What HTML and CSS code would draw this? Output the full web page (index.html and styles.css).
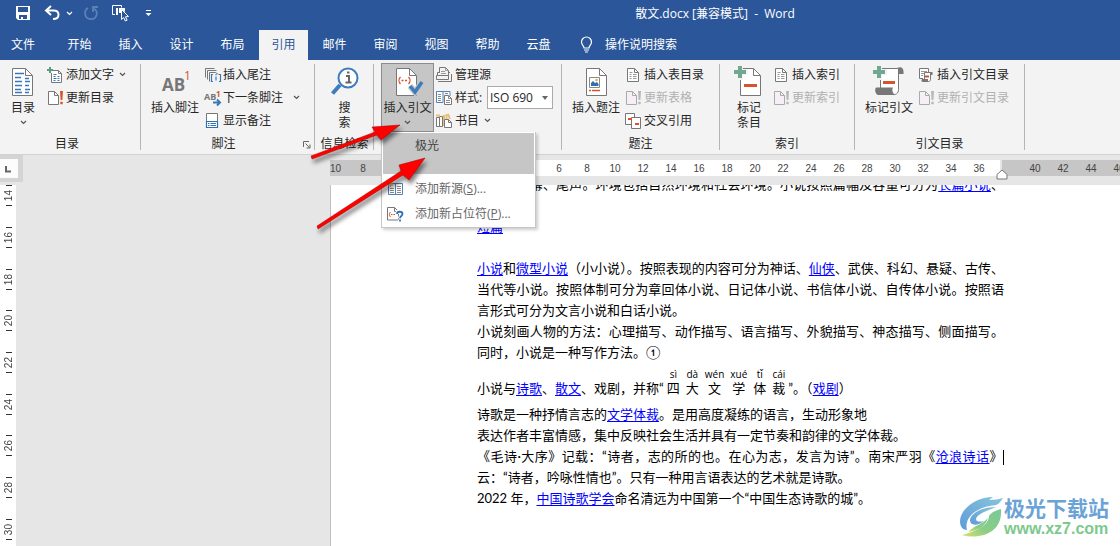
FILE: index.html
```html
<!DOCTYPE html>
<html lang="zh-CN">
<head>
<meta charset="utf-8">
<title>散文.docx - Word</title>
<link rel="stylesheet" href="styles.css">
</head>
<body>
<svg class="defs" aria-hidden="true">
  <symbol id="caret" viewBox="0 0 7 5"><path d="M1 1l2.5 2.5L6 1" fill="none" stroke="currentColor" stroke-width="1.2"/></symbol>
  <symbol id="update" viewBox="0 0 18 16">
    <path d="M1.500 1.500h6l4 4v9h-10z" fill="var(--paper)" stroke="currentColor"/><path d="M7.500 1.500v4h4" fill="none" stroke="currentColor"/>
    <path d="M13 1h3l-.6 9h-1.800zM13.300 11.800h2.400v2.400h-2.400z" fill="var(--mark)"/>
  </symbol>
  <symbol id="list" viewBox="0 0 18 16">
    <path d="M2.500 1.500h7l4 4v9h-11z" fill="#fff" stroke="#777"/><path d="M9.500 1.500v4h4" fill="none" stroke="#777"/>
    <path d="M4.500 5.500h3M4.500 7.500h2M8 7.500h3.500M4.500 9.500h2M8 9.500h3.500M4.500 11.500h2M8 11.500h3.500" stroke="#999"/>
  </symbol>
</svg>

<header class="titlebar">
  <div class="quick">
    <button class="q save" aria-label="保存"><svg width="16" height="16" viewBox="0 0 16 16"><path d="M1 1h14v14H3l-2-2z" fill="#fff"/><path d="M3 2h10v5H3zM4 10h8v4H4z" fill="#2b579a"/><path d="M6 12h2v2H6z" fill="#fff"/></svg></button>
    <button class="q undo" aria-label="撤消"><svg width="16" height="16" viewBox="0 0 16 16"><path d="M7 1L2 5.500 7 10M2.500 5.500h7c3 0 5 1.500 5 4.200 0 2.600-2 4.300-5.500 4.300" fill="none" stroke="#fff" stroke-width="2"/></svg></button>
    <button class="q more" aria-label="撤消选项"><svg width="7" height="5"><use href="#caret"/></svg></button>
    <button class="q redo" aria-label="重复" disabled><svg width="16" height="16" viewBox="0 0 16 16"><path d="M5 3C.5 5.500 1 14 8 14.200c6.500 0 7.500-8 3-10.400M10 7V2h5" fill="none" stroke="#5c80b8" stroke-width="1.800"/></svg></button>
    <button class="q touch" aria-label="触摸/鼠标模式"><svg width="18" height="18" viewBox="0 0 18 18"><path d="M4 10.500H1.500v-9h9v2" fill="none" stroke="#fff"/><path d="M5 4h2v7H5zM8 4h6v4l-4-3v4H8z" fill="#fff"/><path d="M10.500 5.500v10l2.200-2 1.600 3.500 1.800-.8-1.600-3.400 3-.3z" fill="#2b579a" stroke="#fff"/></svg></button>
    <button class="q custom" aria-label="自定义快速访问工具栏"><svg width="7" height="8" viewBox="0 0 7 8"><path d="M1 1.500h5" stroke="#fff"/><path d="M.5 4h6l-3 3z" fill="#fff"/></svg></button>
  </div>
  <div class="doc-title">散文.docx [兼容模式]&nbsp; -&nbsp; Word</div>
</header>

<nav class="tabs">
  <button class="tab file">文件</button><button class="tab">开始</button><button class="tab">插入</button><button class="tab">设计</button><button class="tab">布局</button><button class="tab active">引用</button><button class="tab">邮件</button><button class="tab">审阅</button><button class="tab">视图</button><button class="tab">帮助</button><button class="tab">云盘</button>
  <button class="tell-me"><svg width="13" height="17" viewBox="0 0 13 17"><path d="M4 12c0-2.500-2.500-3-2.500-6a5 5 0 0 1 10 0c0 3-2.500 3.500-2.500 6zM4 14h5M5 16h3" fill="none" stroke="#fff" stroke-width="1.200"/></svg>操作说明搜索</button>
</nav>

<section class="ribbon">
  <div class="group g-toc">
    <div class="tools">
      <button class="big">
        <svg width="32" height="32" viewBox="0 0 32 32"><path d="M5.500 3.500h13l7 7v20h-20z" fill="#fff" stroke="#777"/><path d="M18.500 3.500v7h7" fill="none" stroke="#777"/><path d="M8 8.500h9M8 12.500h6M8 16.500h7M8 20.500h7M8 24.500h6M8 27.500h7M18 13.500h4M18 16.500h5M18 20.500h4M18 24.500h5M18 27.500h4" stroke="#3a78b8" stroke-width="1.300"/></svg>
        <span>目录</span><svg class="drop" width="7" height="5"><use href="#caret"/></svg>
      </button>
      <div class="stack">
        <button class="small"><svg width="18" height="16" viewBox="0 0 18 16"><path d="M4.500 3.500h7l3 3v9h-10z" fill="#fff" stroke="#777"/><path d="M11.500 3.500v3h3" fill="none" stroke="#777"/><path d="M6.500 7.500h3M6.500 9.500h2M10.500 9.500h2M6.500 11.500h3M10.500 11.500h2M6.500 13.500h2M10.500 13.500h2" stroke="#3a78b8"/><path d="M3 0v6M0 3h6" stroke="#f3f3f3" stroke-width="4"/><path d="M3 0v6M0 3h6" stroke="#5a9d83" stroke-width="2"/></svg><span>添加文字</span><svg class="side-drop" width="7" height="5"><use href="#caret"/></svg></button>
        <button class="small upd"><svg width="18" height="16"><use href="#update"/></svg><span>更新目录</span></button>
      </div>
    </div>
    <div class="caption">目录</div>
  </div>

  <div class="group g-note">
    <div class="tools">
      <button class="big">
        <svg width="32" height="32" viewBox="0 0 32 32"><text x="3" y="26" class="ab-big">AB</text><text x="25" y="15" class="one-big">1</text></svg>
        <span>插入脚注</span>
      </button>
      <div class="stack">
        <button class="small"><svg width="18" height="16" viewBox="0 0 18 16"><path d="M1.500 10.500v-9h9M3.500 12.500v-9h9M5.500 14.500v-9h6l3 2" fill="none" stroke="#777"/><path d="M9 7.500H7.500v7H9M15 7.500h1.500v7H15M12 9.500v4M12 7v1.200" fill="none" stroke="#3a78b8" stroke-width="1.200"/></svg><span>插入尾注</span></button>
        <button class="small"><svg width="18" height="16" viewBox="0 0 18 16"><text x="0" y="10" class="ab-small">AB</text><text x="12" y="7" class="one-small">1</text><path d="M9 12.500h6M13 9.500l3 3-3 3" fill="none" stroke="#3a78b8" stroke-width="2"/></svg><span>下一条脚注</span><svg class="side-drop far" width="7" height="5"><use href="#caret"/></svg></button>
        <button class="small"><svg width="18" height="16" viewBox="0 0 18 16"><path d="M2.500.5h11v14h-11z" fill="#fff" stroke="#777"/><path d="M2.500 8.500h11v6h-11z" fill="#fff" stroke="#2f6fb3" stroke-width="1.200"/><path d="M4 10.500h1.500M6.500 10.500h5.500M4 12.500h1.500M6.500 12.500h5.500" stroke="#2f6fb3"/></svg><span>显示备注</span></button>
      </div>
    </div>
    <div class="caption with-launcher"><span>脚注</span><button class="launcher" aria-label="脚注和尾注"><svg width="9" height="9" viewBox="0 0 9 9"><path d="M1.500 7V1.500H7M3.500 3.500l4 4M8 4.500V8H4.500" fill="none" stroke="#666"/></svg></button></div>
  </div>

  <div class="group g-search">
    <div class="tools center">
      <button class="big">
        <svg width="32" height="32" viewBox="0 0 32 32"><path d="M11 20L3.500 28.500" stroke="#3f7cbc" stroke-width="4"/><circle cx="19" cy="13" r="9.500" fill="#fff" stroke="#3f7cbc" stroke-width="2"/><path d="M17 11h3v6M16.500 17.500h6M18 7.500h2.500" fill="none" stroke="#666" stroke-width="2"/></svg>
        <span>搜<br>索</span>
      </button>
    </div>
    <div class="caption">信息检索</div>
  </div>

  <div class="group g-cite">
    <div class="tools">
      <div class="menu-host">
        <button class="big pressed" aria-expanded="true">
          <svg width="32" height="32" viewBox="0 0 32 32"><path d="M4.500 3.500h13l7 7v20h-20z" fill="#fff" stroke="#777"/><path d="M17.500 3.500v7h7" fill="none" stroke="#777"/><path d="M8.500 12c-2 2-2 5 0 7M16.500 12c2 2 2 5 0 7M9.500 15.500h2M13 15.500h2" fill="none" stroke="#d8532b" stroke-width="1.300"/><path d="M18 21l5 6L30 17" fill="none" stroke="#c6c6c6" stroke-width="6"/><path d="M18 21l5 6L30 17" fill="none" stroke="#3f7cbc" stroke-width="3.500"/></svg>
          <span>插入引文</span><svg class="drop" width="7" height="5"><use href="#caret"/></svg>
        </button>
        <div class="menu">
          <button class="menu-item current">极光</button>
          <button class="menu-item"><svg width="18" height="16" viewBox="0 0 18 16"><path d="M1.500 2.500h7v11h-7zM8.500 2.500h7v11h-7z" fill="#fff" stroke="#4a83bd"/><path d="M3 7.500h4M3 9.500h4M3 11.500h4M10 5.500h4M10 7.500h4M10 9.500h4M10 11.500h4" stroke="#888"/><path d="M3.500 0v6M.5 3h6M1.500 1l4 4M5.500 1l-4 4" stroke="#e5aa50"/></svg><span>添加新源(<u>S</u>)...</span></button>
          <button class="menu-item"><svg width="18" height="16" viewBox="0 0 18 16"><path d="M.5 1.500h7l4 4v8.500h-11z" fill="#fff" stroke="#777"/><path d="M7.500 1.500v4h4" fill="none" stroke="#777"/><path d="M3.500 6C2 7.500 2 9.500 3.500 11M4 8.500h1.500M6.500 8.500h1.500" fill="none" stroke="#d8532b"/><path d="M10 8c0-3 5.500-3 5.500 0 0 2-2.500 2-2.500 4.200M13 13.500v2" fill="none" stroke="#fff" stroke-width="4"/><path d="M10 8c0-3 5.500-3 5.500 0 0 2-2.500 2-2.500 4.200M13 13.500v2" fill="none" stroke="#2f6fb3" stroke-width="1.800"/></svg><span>添加新占位符(<u>P</u>)...</span></button>
        </div>
      </div>
      <div class="stack">
        <button class="small"><svg width="18" height="16" viewBox="0 0 18 16"><path d="M3.500 6V.5h6l3 3V9M1.500 8V5.500h2M12.500 5.500h1.500" fill="none" stroke="#777"/><path d="M9.500.5v3h3M5 4.500h4M5 6.500h5" fill="none" stroke="#999"/><path d="M.5 8.500h12v4h-12z" fill="#f3f3f3" stroke="#777"/><path d="M2 14.500h13.500V7" fill="none" stroke="#777"/></svg><span>管理源</span></button>
        <div class="small style-row"><svg width="18" height="16" viewBox="0 0 18 16"><path d="M.5 1.500h6.500v11H.5zM7 1.500h7V6" fill="#fff" stroke="#4a83bd"/><path d="M2 4.500h3M2 6.500h3M2 8.500h3M2 10.500h3M9 3.500h3" stroke="#888"/><path d="M8.500 5.500h4l3 3v6h-7z" fill="#fff" stroke="#777"/><path d="M12.500 5.500v3h3M10 10.500h4M10 12.500h4" fill="none" stroke="#888"/></svg><label for="cite-style">样式:</label><span class="combo"><select id="cite-style"><option>ISO 690</option></select></span></div>
        <button class="small"><svg width="18" height="16" viewBox="0 0 18 16"><path d="M.5 4.500h3v9h-3zM3.500 3.500h3v10h-3z" fill="#fff" stroke="#777"/><path d="M0 2.500h4M8 13V2M10.500 6V1M12 1l2 5" stroke="#e9bf75" stroke-width="2"/><path d="M8.500 6.500h4l3 3v5h-7z" fill="#fff" stroke="#777"/><path d="M12.500 6.500v3h3" fill="none" stroke="#777"/></svg><span>书目</span><svg class="side-drop" width="7" height="5"><use href="#caret"/></svg></button>
      </div>
    </div>
  </div>

  <div class="group g-caption">
    <div class="tools">
      <button class="big">
        <svg width="32" height="32" viewBox="0 0 32 32"><path d="M6.500 3.500h13l7 7v20h-20z" fill="#fff" stroke="#777"/><path d="M19.500 3.500v7h7" fill="none" stroke="#777"/><path d="M9.500 12.500h10v10h-10z" fill="#fff" stroke="#888"/><path d="M11 21v-3l2-2 2 2 2-1 1.500 2v2z" fill="#2f6fb3"/><circle cx="16.500" cy="15" r="1.300" fill="#e9aa4d"/><path d="M9 25.500h2M12 25.500h8" stroke="#d8532b" stroke-width="1.300"/></svg>
        <span>插入题注</span>
      </button>
      <div class="stack">
        <button class="small"><svg width="18" height="16"><use href="#list"/></svg><span>插入表目录</span></button>
        <button class="small upd" disabled><svg width="18" height="16"><use href="#update"/></svg><span>更新表格</span></button>
        <button class="small"><svg width="18" height="16" viewBox="0 0 18 16"><path d="M.5.5h9v11H.5z" fill="#fff" stroke="#777"/><path d="M6.500 4.500h9v11h-9z" fill="#fff" stroke="#777"/><path d="M3 5h4v2H3zM10 10h4v2h-4z" fill="#d8532b"/></svg><span>交叉引用</span></button>
      </div>
    </div>
    <div class="caption">题注</div>
  </div>

  <div class="group g-index">
    <div class="tools">
      <button class="big">
        <svg width="32" height="32" viewBox="0 0 32 32"><path d="M7.500 3.500h13l7 7v20h-20z" fill="#fff" stroke="#777"/><path d="M20.500 3.500v7h7" fill="none" stroke="#777"/><path d="M11 20.500h13" stroke="#d8532b" stroke-width="3"/><path d="M7 0v15M0 7h15" stroke="#f3f3f3" stroke-width="6"/><path d="M7 1v12M1 7h12" stroke="#72a892" stroke-width="4"/></svg>
        <span>标记<br>条目</span>
      </button>
      <div class="stack">
        <button class="small"><svg width="18" height="16"><use href="#list"/></svg><span>插入索引</span></button>
        <button class="small upd" disabled><svg width="18" height="16"><use href="#update"/></svg><span>更新索引</span></button>
      </div>
    </div>
    <div class="caption">索引</div>
  </div>

  <div class="group g-authority">
    <div class="tools">
      <button class="big">
        <svg width="32" height="32" viewBox="0 0 32 32"><path d="M24 3c5-2 7 1 6.500 6H25z" fill="#777"/><path d="M7.500 3.500h18v21c0 4-3 5.500-6 5h-12z" fill="#fff" stroke="#777"/><path d="M3 22.500h17c-1.500 3 0 6 2 7.500H5c-3-1-3.500-6-2-7.500z" fill="#777"/><path d="M10 17.500h12" stroke="#d8532b" stroke-width="3"/><path d="M6 0v15M0 7h14" stroke="#f3f3f3" stroke-width="6"/><path d="M6 1v12M0 7h12" stroke="#72a892" stroke-width="4"/></svg>
        <span>标记引文</span>
      </button>
      <div class="stack">
        <button class="small"><svg width="18" height="16" viewBox="0 0 18 16"><path d="M5 11.500H1.500v-10h9V5" fill="#fff" stroke="#777"/><path d="M3 4.500h6M3 6.500h3M3 8.500h2" stroke="#999"/><path d="M6.500 5.500h6v7c0 2-1.500 2-2.500 2H6.500z" fill="#fff" stroke="#777"/><path d="M4 12h6v3H5c-1.500 0-2-2-1-3zM12 5h2.500v3H12z" fill="#777"/><path d="M7 9.500h4" stroke="#d8532b" stroke-width="2"/></svg><span>插入引文目录</span></button>
        <button class="small upd" disabled><svg width="18" height="16"><use href="#update"/></svg><span>更新引文目录</span></button>
      </div>
    </div>
    <div class="caption">引文目录</div>
  </div>
</section>

<main class="workspace">
  <div class="ruler-row">
    <button class="tab-stop" aria-label="制表符"><svg width="18" height="18" viewBox="0 0 18 18"><path d="M6 6v5.500h5" fill="none" stroke="#666" stroke-width="2"/></svg></button>
    <div class="ruler">
      <div class="r-before"><span>10</span><span>8</span><span>6</span><span>4</span><span>2</span></div>
      <div class="r-body"><span>2</span><span>4</span><span>6</span><span>8</span><span>10</span><span>12</span><span>14</span><span>16</span><span>18</span><span>20</span><span>22</span><span>24</span><span>26</span><span>28</span><span>30</span><span>32</span><span>34</span><span>36</span><svg class="indent" width="12" height="11" viewBox="0 0 12 11"><path d="M1 10V5.500L6 1l5 4.500V10z" fill="#fff" stroke="#777"/></svg></div>
      <div class="r-after"><span>40</span><span>42</span><span>44</span><span>46</span></div>
    </div>
  </div>
  <div class="canvas">
    <div class="v-ruler"><div class="v-scale"><div><b>14</b></div><div><b>16</b></div><div><b>18</b></div><div><b>20</b></div><div><b>22</b></div><div><b>24</b></div><div><b>26</b></div><div><b>28</b></div><div><b>30</b></div></div></div>
    <article class="page">
      <div class="text">
        <p class="full">的包括序幕、尾声。环境包括自然环境和社会环境。小说按照篇幅及容量可分为<a href="#">长篇小说</a>、</p>
        <p><a href="#">中篇小说</a>、</p>
        <p><a href="#">短篇</a></p>
        <p class="blank"></p>
        <p class="full"><a href="#">小说</a>和<a href="#">微型小说</a>（小小说）。按照表现的内容可分为神话、<a href="#">仙侠</a>、武侠、科幻、悬疑、古传、</p>
        <p class="full">当代等小说。按照体制可分为章回体小说、日记体小说、书信体小说、自传体小说。按照语</p>
        <p>言形式可分为文言小说和白话小说。</p>
        <p class="full">小说刻画人物的方法：心理描写、动作描写、语言描写、外貌描写、神态描写、侧面描写。</p>
        <p>同时，小说是一种写作方法。①</p>
        <p class="pinyin">小说与<a href="#">诗歌</a>、<a href="#">散文</a>、戏剧，并称“<ruby>四<rt>sì</rt></ruby><ruby>大<rt>dà</rt></ruby><ruby>文<rt>wén</rt></ruby><ruby>学<rt>xué</rt></ruby><ruby>体<rt>tǐ</rt></ruby><ruby>裁<rt>cái</rt></ruby>”。（<a href="#">戏剧</a>）</p>
        <p>诗歌是一种抒情言志的<a href="#">文学体裁</a>。是用高度凝练的语言，生动形象地</p>
        <p>表达作者丰富情感，集中反映社会生活并具有一定节奏和韵律的文学体裁。</p>
        <p class="full">《毛诗·大序》记载：“诗者，志的所的也。在心为志，发言为诗”。南宋严羽《<a href="#">沧浪诗话</a>》<span class="cursor"></span></p>
        <p>云：“诗者，吟咏性情也”。只有一种用言语表达的艺术就是诗歌。</p>
        <p>2022 年，<a href="#">中国诗歌学会</a>命名清远为中国第一个“中国生态诗歌的城”。</p>
      </div>
    </article>
  </div>
</main>

<svg class="arrows" width="130" height="120" viewBox="0 0 130 120" aria-hidden="true">
  <g fill="#f00" stroke="#a00000" stroke-width=".5">
    <path d="M11 41L75 17 72 12 100 10 81 25 77 20 12 44z"/>
    <path d="M17 111L101 56 99 50 125 43 109 65 103 60 18 114z"/>
  </g>
</svg>

<div class="watermark">
  <svg width="44" height="42" viewBox="0 0 44 42" aria-hidden="true">
    <defs>
      <linearGradient id="leaf" x1="0" y1="1" x2="1" y2="0"><stop offset="0" stop-color="#d8e070"/><stop offset=".4" stop-color="#8ccd84"/><stop offset="1" stop-color="#78c99a"/></linearGradient>
      <linearGradient id="wave" x1="1" y1="0" x2="0" y2="1"><stop offset="0" stop-color="#86c6dc"/><stop offset="1" stop-color="#5f9bd8"/></linearGradient>
    </defs>
    <path d="M33 0C15 0 0 13 0 24c0 6 3 9 7 9C4 22 14 10 36 8c3-1 5-4 7-7-4 1-8 2-14 2z" fill="url(#wave)"/>
    <path d="M36 10C22 10 11 16 10 23c0 6 8 6 14 1-4 1-8 1-8-2 1-5 11-8 20-12z" fill="url(#wave)"/>
    <path d="M41 12C31 15 29 18 29 20 28 28 17 34 2 38c18 5 41-2 39-26z" fill="url(#leaf)"/>
    <path d="M8 35c9-1 18-6 20-14-5 6-13 7-20 14z" fill="url(#leaf)"/>
  </svg>
  <div class="mark-text"><strong>极光下载站</strong><span>www.xz7.com</span></div>
</div>
</body>
</html>
```
FILE: styles.css
```css
* { box-sizing: border-box; }

body {
  margin: 0;
  height: 100vh;
  display: flex;
  flex-direction: column;
  overflow: hidden;
  position: relative;
  background: #e6e6e6;
  color: #262626;
  font: 12px/15px "Open Sans", "Noto Sans CJK SC", sans-serif;
}

button, select { font: inherit; color: inherit; }
button { border: 0; padding: 0; background: none; white-space: nowrap; }
svg { display: block; flex: none; overflow: visible; }
.defs { position: absolute; width: 0; height: 0; }

/* Title bar */
.titlebar { display: flex; align-items: center; flex: none; height: 26px; background: #2b579a; color: #fff; }
.quick { display: flex; align-items: center; padding-left: 15px; }
.undo { margin-left: 13px; }
.more { margin-left: 6px; }
.redo { margin-left: 10px; }
.touch { margin-left: 12px; }
.custom { margin-left: 16px; }
.doc-title { flex: 1; padding-left: 166px; text-align: center; white-space: nowrap; }
.titlebar .doc-title { padding-left: 158px; }

/* Tabs */
.tabs { display: flex; flex: none; gap: 2px; padding-top: 4px; background: #2b579a; color: #fff; }
.tab { width: 49px; height: 30px; padding-bottom: 2px; }
.tab.file { width: 53px; padding-right: 7px; }
.tab.active { background: #f3f3f3; color: #2b579a; }
.tell-me { display: flex; align-items: center; gap: 12px; padding: 0 0 2px 15px; }

/* Ribbon */
.ribbon { display: flex; flex: none; padding-top: 3px; border-bottom: 1px solid #d2d2d2; background: #f3f3f3; }
.group { position: relative; display: flex; flex-direction: column; flex: none; height: 91px; }
.group::after { content: ""; position: absolute; right: 0; top: 1px; bottom: 4px; width: 1px; background: #b4b4b4; }
.g-toc { width: 141px; padding-left: 1px; }
.g-note { width: 174px; padding-left: 7px; }
.g-search { width: 59px; }
.g-cite { width: 188px; padding-left: 7px; }
.g-caption { width: 158px; padding-left: 7px; }
.g-index { width: 135px; padding-left: 7px; }
.g-authority { width: 170px; padding-left: 7px; }
.tools { display: flex; height: 69px; }
.tools.center { justify-content: center; }
.big { display: flex; flex-direction: column; align-items: center; flex: none; min-width: 44px; height: 69px; padding: 2px 1px 0; }
.big span { margin-top: 3px; }
.g-note .big { width: 54px; }
.g-caption .big, .g-authority .big { width: 54px; }
.drop { margin-top: 5px; color: #555; }
.stack { display: flex; flex-direction: column; padding-left: 2px; }
.small { display: flex; align-items: center; height: 23px; gap: 1px; --paper: #fff; --mark: #d8532b; }
.upd svg { color: #777; }
.small:disabled { color: #b1b1b1; --paper: #f6f0f6; --mark: #b8b8b8; }
.small:disabled svg { color: #aaa; }
.side-drop { margin-left: 4px; color: #555; }
.side-drop.far { margin-left: 9px; }
.caption { flex: 1; padding: 4px 8px 0 0; text-align: center; }
.g-search .caption { padding-right: 0; }
.g-authority .caption { padding-right: 8px; }
.with-launcher { display: flex; padding-right: 4px; }
.with-launcher span { flex: 1; }
.launcher { align-self: flex-start; padding-top: 4px; }
.g-note .with-launcher { padding-left: 4px; margin-left: -7px; }
.ab-big { font: bold 17px "Open Sans", sans-serif; fill: #777; }
.one-big { font: 12px "Open Sans", sans-serif; fill: #d8532b; }
.ab-small { font: bold 9px "Open Sans", sans-serif; fill: #777; }
.one-small { font: bold 8px "Open Sans", sans-serif; fill: #d8532b; }

.menu-host { position: relative; }
.pressed { width: 53px; border: 1px solid #8c8c8c; background: #c6c6c6; padding: 1px 0 0; }
.style-row label { width: 31px; }
.combo { position: relative; display: block; }
.combo::after { content: ""; position: absolute; right: 5px; top: 10px; border: 3px solid transparent; border-top: 4px solid #666; border-bottom: 0; pointer-events: none; }
.combo select { display: block; width: 66px; height: 23px; padding: 0 2px; border: 1px solid #ababab; border-radius: 0; background: #fff; appearance: none; }

.menu { position: absolute; left: 0; top: 100%; z-index: 5; width: 155px; padding: 1px; border: 1px solid #c6c6c6; border-top-width: 0; background: #fff; box-shadow: 2px 2px 3px rgba(0, 0, 0, .2); color: #666; }
.menu-item { display: flex; align-items: center; gap: 10px; width: 100%; height: 25px; padding-left: 4px; }
.menu-item.current { height: 41px; margin-bottom: 2px; padding: 0 0 16px 32px; background: #c6c6c6; color: #444; }

/* Workspace */
.workspace { display: flex; flex-direction: column; flex: 1; min-height: 0; }
.ruler-row { display: flex; flex: none; height: 30px; overflow: hidden; }
.tab-stop { display: flex; align-items: center; flex: none; width: 23px; height: 27px; border: solid #d4d4d4; border-width: 4px 5px 4px 0; background: #fcfcfc; }
.ruler { display: flex; flex: 1; height: 16px; margin: 5px 0 0 307px; font: 10px/17px "Liberation Sans", sans-serif; color: #444; min-width: 0; }
.ruler span { flex: none; width: 28px; text-align: center; }
.r-before { display: flex; flex: none; width: 147px; overflow: hidden; background: #c6c6c6; }
.r-before span:first-child { width: 19px; padding-right: 9px; }
.r-body { position: relative; display: flex; flex: none; width: 523px; padding-left: 12px; background: #fff; }
.indent { position: absolute; right: -8px; top: 9px; }
.r-after { display: flex; flex: 1; min-width: 0; margin-left: 2px; padding-left: 19px; overflow: hidden; background: #c6c6c6; }

.canvas { display: flex; flex: 1; min-height: 0; overflow: hidden; }
.v-ruler { display: flex; flex: none; width: 16px; background: #fff; }
.v-scale { display: flex; flex-direction: column; flex: 1; margin: -10px 0 -4px; }
.v-scale div { display: flex; flex-direction: column; align-items: center; justify-content: center; flex: 1; padding-left: 2px; gap: 4px; }
.v-scale div::before, .v-scale div::after { content: ""; width: 6px; height: 1px; background: #333; }
.v-scale b { writing-mode: vertical-rl; transform: rotate(180deg); font: 10px/12px "Liberation Sans", sans-serif; color: #444; }

.page { flex: 1; min-width: 0; margin-left: 314px; padding-left: 146px; overflow: hidden; border-left: 1px solid #c0c0c0; background: #fff; color: #000; }
.text { width: 527px; margin-top: -11px; font: 13px/21px Lato, "Noto Sans CJK SC", sans-serif; }
.text p { margin: 0; height: 21px; white-space: nowrap; }
.text .full { text-align-last: justify; }
.text a { color: #00f; text-decoration: underline; text-underline-offset: 2px; }
.text .pinyin { height: 41px; padding-top: 15px; }
.pinyin ruby { padding: 0 3px; }
.pinyin rt { font: 10px/2px "Open Sans", sans-serif; }
.cursor { display: inline-block; width: 1px; height: 15px; background: #000; vertical-align: middle; }

/* Overlays */
.arrows { position: absolute; left: 300px; top: 115px; z-index: 10; pointer-events: none; filter: drop-shadow(2px 4px 2px rgba(0, 0, 0, .5)); }
.watermark { position: absolute; right: 11px; bottom: 7px; display: flex; align-items: center; }
.mark-text { display: flex; flex-direction: column; }
.mark-text strong { font: bold 21px/23px "Noto Sans CJK SC", sans-serif; color: #6ba3d6; }
.mark-text span { font: bold 16px/20px "Liberation Sans", sans-serif; color: #7cc98e; }
```
